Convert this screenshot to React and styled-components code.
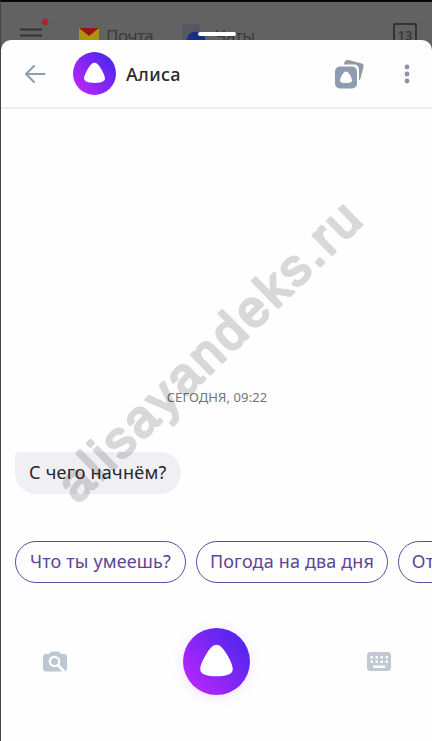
import React from 'react'
import styled, {createGlobalStyle} from 'styled-components'

const GlobalStyle = createGlobalStyle`
    * { box-sizing: border-box; }
    body {
        margin: 0;
        background: #626262;
        font-family: "Noto Sans", "Open Sans", sans-serif;
        overflow: hidden;
    }
    svg { display: block; flex: none; }
    button {
        padding: 0;
        border: 0;
        background: none;
        font: inherit;
    }
`

const Screen = styled.div`
    position: relative;
    display: flex;
    flex-direction: column;
    width: 432px;
    height: 741px;
    overflow: hidden;
    border-top: 2px solid #080808;
    border-left: 1px solid #444;
`

const Backdrop = styled.div`
    display: flex;
    align-items: flex-start;
    height: 38px;
    flex: none;
    padding: 16px 15px 0 19px;
    color: #393939;
`

const BackdropLabel = styled.span`
    width: ${props => props.$width}px;
    margin: 6px 0 0 ${props => props.$gap}px;
    font-size: 17px;
    line-height: 24px;
    letter-spacing: -0.5px;
    white-space: nowrap;
`

const BackdropIcon = styled.svg`
    margin-left: ${props => props.$gap}px;
`

const TabCount = styled.span`
    width: 24px;
    height: 24px;
    margin: 5px 0 0 auto;
    border: 2px solid #343434;
    border-radius: 2px;
    font-size: 13px;
    font-weight: 600;
    line-height: 20px;
    text-align: center;
`

const Handle = styled.div`
    position: absolute;
    top: 30px;
    left: 197px;
    width: 38px;
    height: 4px;
    border-radius: 2px;
    background: #fff;
    z-index: 1;
`

/* Slides over the lower part of the page behind it */
const Sheet = styled.main`
    position: relative;
    display: flex;
    flex-direction: column;
    flex: 1;
    min-height: 0;
    border-radius: 10px 10px 0 0;
    background: #fefefe;
`

const Header = styled.header`
    display: flex;
    align-items: center;
    height: 69px;
    flex: none;
    padding: 0 22px 0 23px;
    border-bottom: 2px solid #efefef;
`

const Title = styled.h1`
    flex: 1;
    margin: 0 0 0 10px;
    color: #29292c;
    font-size: 18px;
    font-weight: 500;
    line-height: 26px;
    letter-spacing: 0.3px;
`

const BackButton = styled.button`
    margin-right: 27px;
`

const MenuButton = styled.button`
    margin-left: 39px;
`

const Messages = styled.section`
    display: flex;
    flex-direction: column;
    align-items: flex-start;
    justify-content: flex-end;
    flex: 1;
    padding: 0 14px 47px;
`

const DateLabel = styled.time`
    align-self: center;
    margin: 0 0 45px 1px;
    color: #747474;
    font-size: 13px;
    line-height: 20px;
    letter-spacing: 0.1px;
`

const Bubble = styled.div`
    height: 42px;
    padding: 0 14px;
    border-radius: 4px 21px 21px 21px;
    background: #f0eff4;
    color: #26262a;
    font-size: 18px;
    line-height: 41px;
    letter-spacing: 0.25px;
    white-space: nowrap;
`

const Suggestions = styled.div`
    display: flex;
    gap: 10px;
    flex: none;
    padding-left: 14px;
    overflow: hidden;
`

const Chip = styled.button`
    flex: none;
    width: ${props => props.$width}px;
    height: 42px;
    padding-bottom: 2px;
    border: 1px solid #634b9c;
    border-radius: 21px;
    color: #5f4499;
    font-size: 18px;
    line-height: 38px;
    letter-spacing: 0.15px;
    white-space: nowrap;
`

const Controls = styled.footer`
    display: flex;
    align-items: center;
    justify-content: space-between;
    height: 158px;
    flex: none;
    padding: 0 41px 2px 42px;
`

const VoiceButton = styled.button`
    margin-right: 2px;
    border-radius: 50%;
    box-shadow: 0 2px 12px rgba(160, 60, 255, 0.16);
`

const Watermark = styled.svg`
    position: absolute;
    top: -2px;
    left: -1px;
    pointer-events: none;
    opacity: 0.145;
    font-family: "Liberation Sans", Arial, sans-serif;
    font-size: 51px;
`

const AliceLogo = ({size, id}) => (
    <svg width={size} height={size} viewBox="0 0 68 68">
        <defs>
            <linearGradient id={id} x1="8" y1="58" x2="60" y2="14" gradientUnits="userSpaceOnUse">
                <stop offset="0" stopColor="#b526fb"/>
                <stop offset="1" stopColor="#5426f0"/>
            </linearGradient>
        </defs>
        <circle cx="34" cy="34" r="34" fill={`url(#${id})`}/>
        <path d="M34 17c3.5 0 6.300 3 9.800 8.700 3.500 5.700 6.700 11.700 6.700 16.300 0 5.200-8 7-16.500 7s-16.500-1.800-16.500-7c0-4.600 3.200-10.600 6.700-16.300 3.500-5.700 6.300-8.700 9.800-8.700z" fill="#fff"/>
    </svg>
)

const ArrowIcon = () => (
    <svg width="22" height="20" viewBox="0 0 22 20" fill="none" stroke="#8f9bb0" strokeWidth="2"
         strokeLinecap="round" strokeLinejoin="round">
        <path d="M20.500 10H3M10 2 2 10l8 8"/>
    </svg>
)

const SkillsIcon = () => (
    <svg width="30" height="30" viewBox="0 0 30 30">
        <path d="M9 5.500 9.500 3Q10.500.500 13.500 1L26 4.200Q29.300 5 28.500 8L25.500 19.500Q25 21 24 21V11Q24 5.500 19 5.500Z" fill="#9499a7"/>
        <rect x="0" y="7.500" width="22" height="22" rx="5" fill="#8e9bb1"/>
        <path d="M11 12.500c2.800 0 6 6.500 6 9 0 1.900-2.800 2.500-6 2.500s-6-.600-6-2.500c0-2.500 3.200-9 6-9z" fill="#fff"/>
    </svg>
)

const DotsIcon = () => (
    <svg width="6" height="20" viewBox="0 0 6 20" fill="#8d93a2">
        <circle cx="3" cy="3" r="2.400"/>
        <circle cx="3" cy="10" r="2.400"/>
        <circle cx="3" cy="17" r="2.400"/>
    </svg>
)

const CameraIcon = () => (
    <svg width="24" height="21" viewBox="0 0 24 21">
        <path d="M3 3h3l1.500-2Q8 .500 9 .500h6q1 0 1.500.500L18 3h3q3 0 3 3v11.500q0 3-3 3H3q-3 0-3-3V6q0-3 3-3z" fill="#bec6d1"/>
        <circle cx="11.500" cy="10.500" r="4.700" fill="none" stroke="#fff" strokeWidth="2.200"/>
        <path d="m15 14 6 6.500" stroke="#fff" strokeWidth="3"/>
    </svg>
)

const KeyboardIcon = () => (
    <svg width="24" height="19" viewBox="0 0 24 19">
        <rect width="24" height="19" rx="3.500" fill="#c2c9d4"/>
        <path d="M3.500 4h2.500v2.500H3.500zM8.500 4H11v2.500H8.500zM13.500 4H16v2.500h-2.500zM18.500 4H21v2.500h-2.500zM3.500 8.500H6V11H3.500zM8.500 8.500H11V11H8.500zM13.500 8.500H16V11h-2.500zM18.500 8.500H21V11h-2.500zM6 13.500h12V16H6z" fill="#fff"/>
    </svg>
)

const suggestions = [
    {text: 'Что ты умеешь?', width: 171},
    {text: 'Погода на два дня', width: 192},
    {text: 'Открой чат', width: 127},
]

const App = () => (
    <React.Fragment>
        <GlobalStyle/>
        <Screen>
            <Backdrop>
                <svg width="30" height="24" viewBox="0 0 30 24">
                    <path d="M0 11.500h22M0 17.500h22" stroke="#303330" strokeWidth="2"/>
                    <circle cx="25" cy="4" r="3.500" fill="#a22a30"/>
                </svg>
                <BackdropIcon $gap={29} width="20" height="22" viewBox="0 0 20 22">
                    <path d="M0 10h20v12H0z" fill="#ac940e"/>
                    <path d="M0 10h20l-10 8z" fill="#97160f"/>
                </BackdropIcon>
                <BackdropLabel $gap={7} $width={50}>Почта</BackdropLabel>
                <BackdropIcon $gap={26} width="24" height="22" viewBox="0 0 24 22">
                    <path d="M0 6h18v16H0z" fill="#56585f"/>
                    <circle cx="14" cy="23" r="9.500" fill="#172f80"/>
                </BackdropIcon>
                <BackdropLabel $gap={9} $width={45}>Чаты</BackdropLabel>
                <TabCount>13</TabCount>
            </Backdrop>
            <Handle/>
            <Sheet>
                <Header>
                    <BackButton aria-label="Назад"><ArrowIcon/></BackButton>
                    <AliceLogo size={43} id="avatar"/>
                    <Title>Алиса</Title>
                    <SkillsIcon/>
                    <MenuButton aria-label="Меню"><DotsIcon/></MenuButton>
                </Header>
                <Messages>
                    <DateLabel>СЕГОДНЯ, 09:22</DateLabel>
                    <Bubble>С чего начнём?</Bubble>
                </Messages>
                <Suggestions>
                    {suggestions.map(item => (
                        <Chip key={item.text} $width={item.width}>{item.text}</Chip>
                    ))}
                </Suggestions>
                <Controls>
                    <button aria-label="Камера"><CameraIcon/></button>
                    <VoiceButton aria-label="Голос"><AliceLogo size={67} id="voice"/></VoiceButton>
                    <button aria-label="Клавиатура"><KeyboardIcon/></button>
                </Controls>
            </Sheet>
            <Watermark width="432" height="741">
                <text transform="translate(77.500 504.500) rotate(-44.500)" textLength="402" stroke="#000"
                      strokeWidth="3" strokeLinejoin="round">alisayandeks.ru</text>
            </Watermark>
        </Screen>
    </React.Fragment>
)

export default App
